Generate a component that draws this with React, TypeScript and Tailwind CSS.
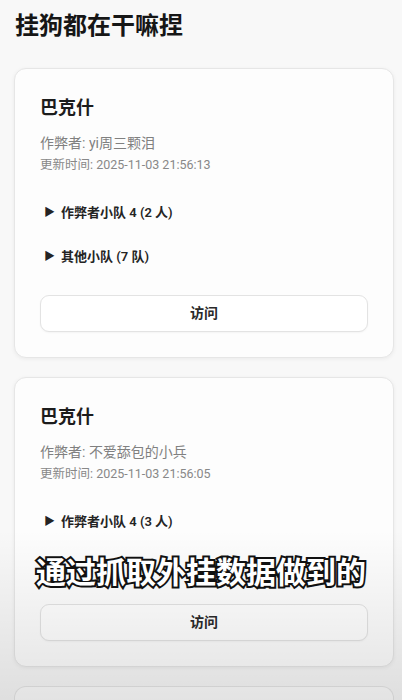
interface Team {
  label: string;
}

interface Cheater {
  map: string;
  name: string;
  updated: string;
  teams: Team[];
}

const cheaters: Cheater[] = [
  {
    map: "巴克什",
    name: "yi周三颗泪",
    updated: "2025-11-03 21:56:13",
    teams: [{ label: "作弊者小队 4 (2 人)" }, { label: "其他小队 (7 队)" }],
  },
  {
    map: "巴克什",
    name: "不爱舔包的小兵",
    updated: "2025-11-03 21:56:05",
    teams: [{ label: "作弊者小队 4 (3 人)" }, { label: "其他小队 (6 队)" }],
  },
];

function CheaterCard({ item, hideLast }: { item: Cheater; hideLast?: boolean }) {
  return (
    <div className="ml-[14px] w-[380px] rounded-[12px] border border-[#e6e6e6] bg-[#fdfdfd] px-[25px] pt-[26px] pb-[25px] shadow-[0_1px_4px_rgba(0,0,0,0.06)]">
      <h2 className="text-[18px] leading-[26px] font-bold text-[#1c1c1c]">{item.map}</h2>
      <p className="mt-3 text-[14px] leading-[20px] text-[#808080]">作弊者: {item.name}</p>
      <p className="mt-[3px] text-[12.5px] leading-[18px] text-[#888]">更新时间: {item.updated}</p>

      {/* team rows, shown as closed disclosure rows */}
      <div className="mt-[29px] flex flex-col gap-[24px]">
        {item.teams.map((team, i) => (
          <div
            key={team.label}
            className={
              "flex items-center gap-[6px] pl-[4px] text-[13px] leading-[20px] font-semibold text-[#242424] " +
              (hideLast && i === item.teams.length - 1 ? "invisible" : "")
            }
          >
            <span className="text-[11px]">▶</span>
            <span>{team.label}</span>
          </div>
        ))}
      </div>

      <button className="mt-[28px] flex h-[37px] w-full items-center justify-center rounded-[9px] border border-[#e3e3e3] bg-white text-[14px] font-semibold text-[#2a2a2a] shadow-[0_1px_2px_rgba(0,0,0,0.04)]">
        访问
      </button>
    </div>
  );
}

export default function App() {
  return (
    <div className="relative h-[700px] overflow-hidden bg-[#f8f8f8] font-['Roboto','Noto_Sans_CJK_SC',sans-serif]">
      <h1 className="px-[15px] pt-[10px] text-[24px] leading-[32px] font-bold text-[#161616]">
        挂狗都在干嘛捏
      </h1>

      <div className="mt-[26px] flex flex-col gap-[19px]">
        {cheaters.map((item, index) => (
          <CheaterCard key={item.name} item={item} hideLast={index === 1} />
        ))}
        {/* next card, only its top edge is on screen */}
        <div className="ml-[14px] h-[40px] w-[380px] rounded-t-[12px] border border-b-0 border-[#e6e6e6] bg-[#fdfdfd]" />
      </div>

      {/* video frame darkening at the bottom */}
      <div className="pointer-events-none absolute inset-x-0 bottom-0 h-[170px] bg-gradient-to-b from-transparent to-[rgba(0,0,0,0.1)]" />

      {/* burned-in caption */}
      <div className="pointer-events-none absolute inset-x-0 top-[550px] text-center text-[30px] leading-[40px] font-bold text-white font-['Noto_Sans_CJK_SC',sans-serif] [-webkit-text-stroke:4px_#111] [paint-order:stroke_fill]">
        通过抓取外挂数据做到的
      </div>
    </div>
  );
}
